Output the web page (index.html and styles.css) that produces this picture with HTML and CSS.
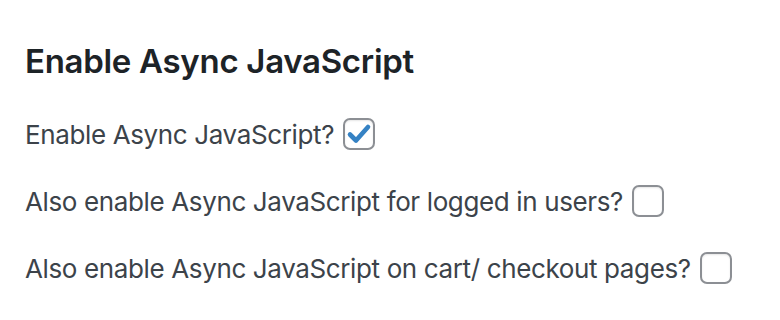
FILE: index.html
```html
<!DOCTYPE html>
<html>
<head>
<meta charset="utf-8">
<link rel="stylesheet" href="styles.css">
</head>
<body>
<div class="panel">
  <h2 class="title">Enable Async JavaScript</h2>
  <div class="row"><span>Enable Async JavaScript?</span><span class="cb checked"><svg viewBox="0 0 28 28" width="28" height="28"><path d="M5 14.5 L11 20.5 L23 7" fill="none" stroke="#3582c4" stroke-width="4.6" stroke-linecap="round" stroke-linejoin="round"/></svg></span></div>
  <div class="row"><span>Also enable Async JavaScript for logged in users?</span><span class="cb"></span></div>
  <div class="row"><span>Also enable Async JavaScript on cart/ checkout pages?</span><span class="cb"></span></div>
</div>
</body>
</html>
```
FILE: styles.css
```css
html, body { margin: 0; padding: 0; background: #fff; }
body { font-family: Inter, "Noto Sans", sans-serif; }
.panel { padding: 39px 24px 0 25px; display: flex; flex-direction: column; }
.title { margin: 0 0 36px 0; font-size: 33px; font-weight: 600; color: #1d2327; line-height: 44px; letter-spacing: -0.3px; }
.row { display: flex; align-items: center; gap: 9px; font-size: 26px; color: #3c434a; height: 32px; margin-bottom: 35px; letter-spacing: -0.37px; }
.row:first-of-type { margin-top: -1px; }
.cb { width: 28px; height: 28px; border: 2px solid #8c8f94; border-radius: 7px; background: #fff; display: inline-flex; align-items: center; justify-content: center; flex: none; box-shadow: inset 0 1px 2px rgba(0,0,0,0.1); }
.cb svg { width: 28px; height: 28px; display: block; }
```
